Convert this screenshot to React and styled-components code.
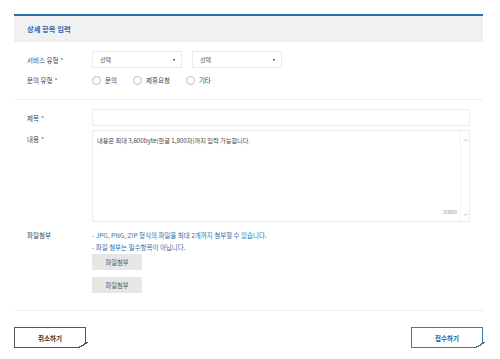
import styled, { createGlobalStyle } from 'styled-components';

const GlobalStyle = createGlobalStyle`
  html, body {
    margin: 0;
    padding: 0;
    background: #fff;
  }
  body {
    font-family: "Noto Sans CJK KR", "Noto Sans", sans-serif;
    color: #444;
  }
`

const Page = styled.div`
  width: 469px;
  padding: 14px 17px 0 14px;
`

const PanelHead = styled.div`
  border-top: 2px solid #2c6fb3;
  background: #f1f1f1;
  height: 26px;
  display: flex;
  align-items: center;
  padding-left: 13px;
  font-size: 7.3px;
  font-weight: 700;
  color: #2a68a8;
`

const Section = styled.div`
  padding: ${p => p.$pad};
  border-bottom: 1px solid #efefef;
  display: flex;
  flex-direction: column;
`

const Row = styled.div`
  display: flex;
  align-items: ${p => p.$top ? 'flex-start' : 'center'};
  padding: 0 13px;
  margin-top: ${p => p.$mt || 0}px;
`

const Label = styled.div`
  width: 65px;
  flex-shrink: 0;
  font-size: 6.5px;
  color: #444;
  line-height: 12px;
  padding-top: ${p => p.$pt || 0}px;
`

const Req = styled.span`
  color: #2a68a8;
  margin-left: 2px;
`

const Field = styled.div`
  flex: 1;
  display: flex;
  flex-direction: ${p => p.$col ? 'column' : 'row'};
  align-items: ${p => p.$col ? 'flex-start' : 'center'};
  gap: ${p => p.$gap || 0}px;
`

const Select = styled.div`
  width: 90px;
  height: 17px;
  box-sizing: border-box;
  border: 1px solid #ececec;
  display: flex;
  align-items: center;
  justify-content: space-between;
  padding: 0 6px 0 7px;
  font-size: 6px;
  color: #555;
`

const Caret = styled.span`
  width: 0;
  height: 0;
  border-left: 1.5px solid transparent;
  border-right: 1.5px solid transparent;
  border-top: 2.5px solid #222;
`

const Radio = styled.label`
  display: flex;
  align-items: center;
  gap: 4px;
  font-size: 6.5px;
  color: #444;
  line-height: 12px;
`

const Circle = styled.span`
  width: 9px;
  height: 9px;
  box-sizing: border-box;
  border: 1px solid #bdbdbd;
  border-radius: 50%;
`

const Input = styled.div`
  flex: 1;
  height: 17px;
  box-sizing: border-box;
  border: 1px solid #ececec;
`

const TextBox = styled.div`
  flex: 1;
  height: 92px;
  box-sizing: border-box;
  border: 1px solid #ececec;
  display: flex;
`

const TextInner = styled.div`
  flex: 1;
  display: flex;
  flex-direction: column;
  padding: 5px 3px 4px 4px;
`

const Placeholder = styled.div`
  font-size: 6.2px;
  color: #444;
  line-height: 10px;
`

const Counter = styled.div`
  margin-top: auto;
  align-self: flex-end;
  font-size: 4.5px;
  color: #999;
  line-height: 8px;
  font-family: "Liberation Sans", sans-serif;
`

const Scroll = styled.div`
  width: 8px;
  border-left: 1px solid #f3f3f3;
  display: flex;
  flex-direction: column;
  justify-content: space-between;
  align-items: center;
  padding: 8px 0 5px;
`

const Notes = styled.div`
  font-size: 6.5px;
  line-height: 12px;
  color: #2f70ad;
`

const GrayBtn = styled.div`
  width: 50px;
  height: 16px;
  margin-top: ${p => p.$mt || 0}px;
  background: #e6e6e6;
  display: flex;
  align-items: center;
  justify-content: center;
  font-size: 6.3px;
  color: #555;
`

const Footer = styled.div`
  display: flex;
  justify-content: space-between;
  padding-top: 16px;
`

const CutBtn = styled.div`
  position: relative;
  width: 72px;
  height: 21px;
  box-sizing: border-box;
  border: 1.5px solid ${p => p.$color};
  display: flex;
  align-items: center;
  justify-content: center;
  font-size: 6.5px;
  font-weight: 700;
  color: ${p => p.$text};
  &::after {
    content: '';
    position: absolute;
    right: -3px;
    bottom: -2px;
    width: 11px;
    height: 7px;
    background: linear-gradient(to bottom right,
      transparent calc(50% - 0.8px),
      ${p => p.$color} calc(50% - 0.8px),
      ${p => p.$color} calc(50% + 0.6px),
      #fff calc(50% + 0.6px));
  }
`

function Chevron({ up }) {
  return (
    <svg width="5" height="3" viewBox="0 0 5 3">
      <polyline
        points={up ? '0.5,2.5 2.5,0.5 4.5,2.5' : '0.5,0.5 2.5,2.5 4.5,0.5'}
        fill="none"
        stroke="#aaa"
        strokeWidth="0.7"
      />
    </svg>
  );
}

export default function App() {
  return (
    <>
      <GlobalStyle />
      <Page>
        <PanelHead>상세 항목 입력</PanelHead>

        <Section $pad="9px 0 13px">
          <Row>
            <Label>서비스 유형<Req>*</Req></Label>
            <Field $gap={10}>
              <Select>선택<Caret /></Select>
              <Select>선택<Caret /></Select>
            </Field>
          </Row>
          <Row $mt={6}>
            <Label>문의 유형<Req>*</Req></Label>
            <Field $gap={16}>
              <Radio><Circle />문의</Radio>
              <Radio><Circle />제휴요청</Radio>
              <Radio><Circle />기타</Radio>
            </Field>
          </Row>
        </Section>

        <Section $pad="9px 0 17px">
          <Row>
            <Label>제목<Req>*</Req></Label>
            <Field>
              <Input />
            </Field>
          </Row>
          <Row $top $mt={4}>
            <Label $pt={3}>내용<Req>*</Req></Label>
            <Field>
              <TextBox>
                <TextInner>
                  <Placeholder>내용은 최대 3,600byte(한글 1,800자)까지 입력 가능합니다.</Placeholder>
                  <Counter>0/3600</Counter>
                </TextInner>
                <Scroll>
                  <Chevron up />
                  <Chevron />
                </Scroll>
              </TextBox>
            </Field>
          </Row>
          <Row $top $mt={7}>
            <Label>파일첨부</Label>
            <Field $col $gap={7}>
              <Notes>
                - JPG, PNG, ZIP 형식의 파일을 최대 2개까지 첨부할 수 있습니다.<br />
                - 파일 첨부는 필수항목이 아닙니다.
              </Notes>
              <GrayBtn $mt={-6}>파일첨부</GrayBtn>
              <GrayBtn>파일첨부</GrayBtn>
            </Field>
          </Row>
        </Section>

        <Footer>
          <CutBtn $color="#555" $text="#333">취소하기</CutBtn>
          <CutBtn $color="#3d7da6" $text="#2b5d8c">접수하기</CutBtn>
        </Footer>
      </Page>
    </>
  );
}
